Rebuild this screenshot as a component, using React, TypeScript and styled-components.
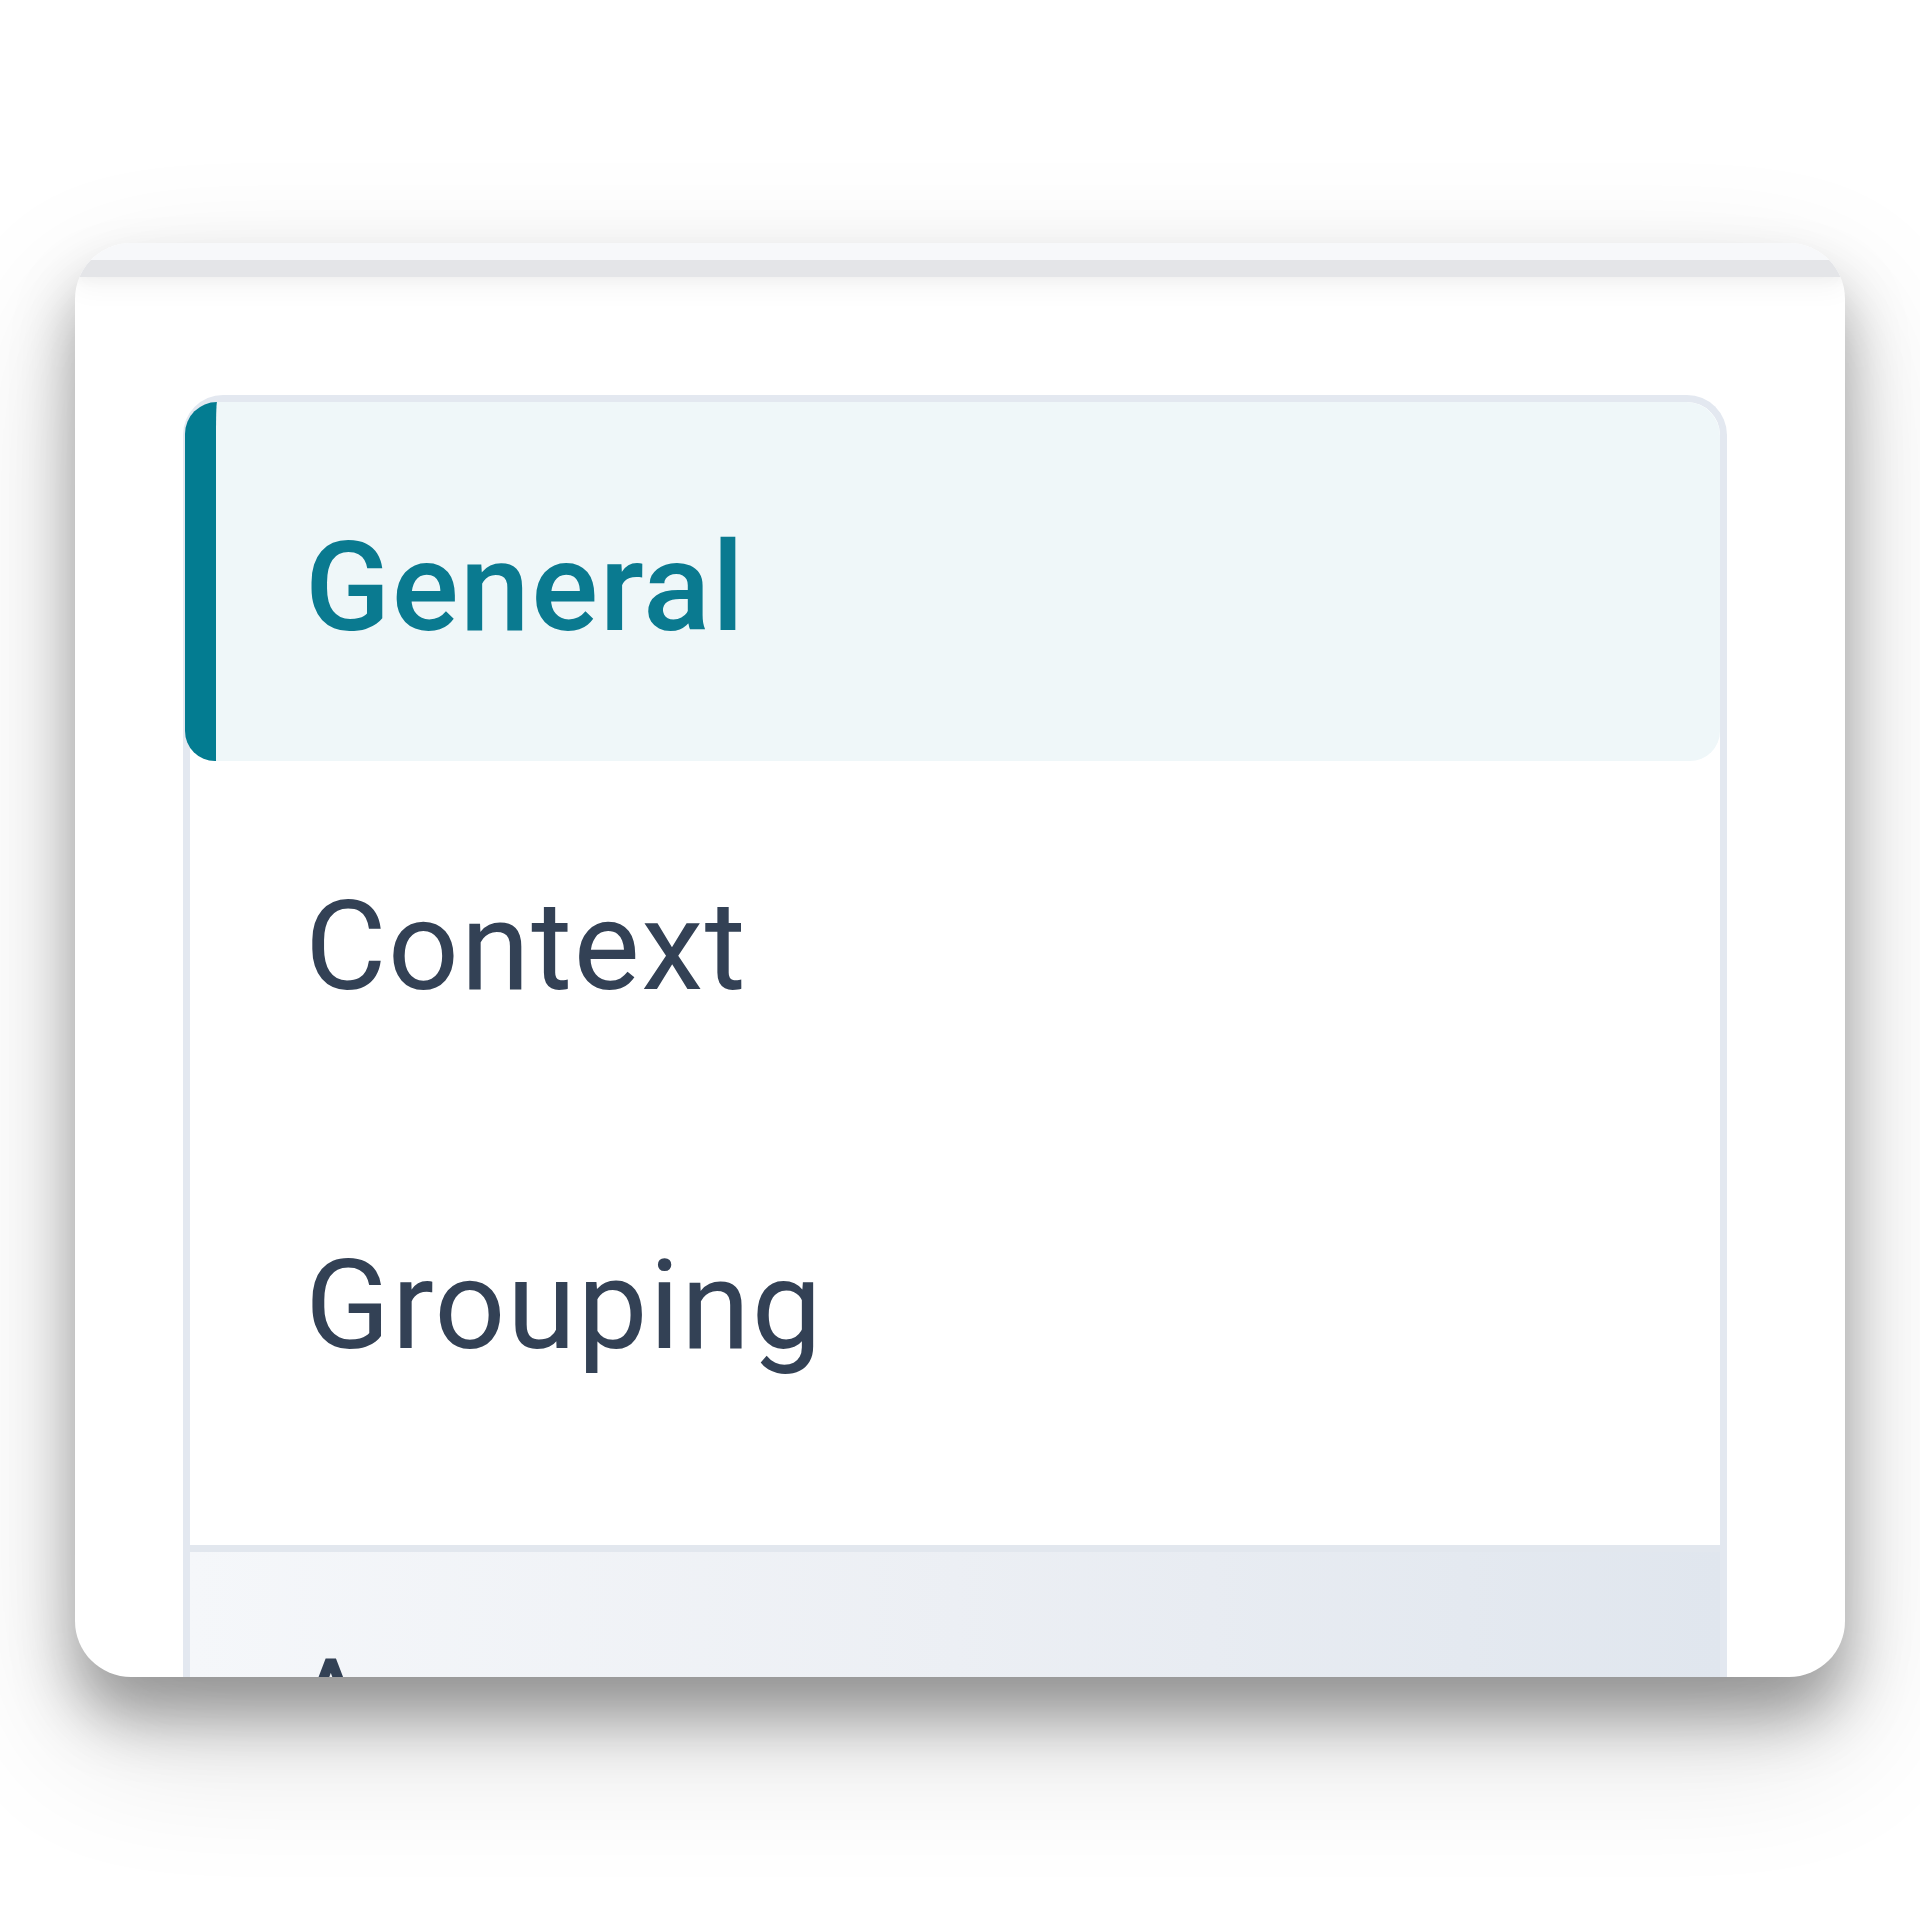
import React from "react";
import styled, { createGlobalStyle } from "styled-components";

const GlobalStyle = createGlobalStyle`
  html, body {
    margin: 0;
    padding: 0;
    background: #ffffff;
  }
  body {
    font-family: Roboto, "Liberation Sans", sans-serif;
  }
`;

const Page = styled.div`
  width: 1920px;
  height: 1920px;
  box-sizing: border-box;
  padding: 243px 75px 0 75px;
  overflow: hidden;
`;

const Card = styled.div`
  height: 1434px;
  background: #ffffff;
  border-radius: 56px;
  overflow: hidden;
  display: flex;
  flex-direction: column;
  box-shadow: 0 40px 60px rgba(0, 0, 0, 0.34), 0 60px 150px rgba(0, 0, 0, 0.15);
`;

const HeaderEdge = styled.div`
  flex-shrink: 0;
  height: 17px;
  background: #f7f8fa;
  border-bottom: 17px solid #e4e5e8;
  box-shadow: 0 4px 10px rgba(0, 0, 0, 0.03), 0 14px 26px rgba(0, 0, 0, 0.035);
  position: relative;
  z-index: 1;
`;

const Body = styled.div`
  flex: 1;
  min-height: 0;
  padding: 118px 118px 0 108px;
`;

const Panel = styled.nav`
  height: 100%;
  box-sizing: border-box;
  border: 7px solid #e3e8f0;
  border-bottom: none;
  border-radius: 40px 40px 0 0;
  display: flex;
  flex-direction: column;
`;

const List = styled.div`
  display: flex;
  flex-direction: column;
  padding-bottom: 66px;
`;

const Item = styled.div<{ $active?: boolean }>`
  height: 359px;
  box-sizing: border-box;
  font-size: 125px;
  line-height: 149px;
  letter-spacing: 1.5px;
  padding-top: 111px;
  padding-left: ${(p) => (p.$active ? "89px" : "115px")};
  margin-left: ${(p) => (p.$active ? "-5px" : "0")};
  border-left: ${(p) => (p.$active ? "31px solid #037c91" : "none")};
  border-radius: ${(p) => (p.$active ? "32px 34px 30px 30px" : "0")};
  background: ${(p) => (p.$active ? "#eff7f9" : "transparent")};
  color: ${(p) => (p.$active ? "#0a7a90" : "#334155")};
  font-weight: ${(p) => (p.$active ? 500 : 400)};
  white-space: nowrap;
`;

const Section = styled.div`
  flex: 1;
  min-height: 0;
  overflow: hidden;
  border-top: 7px solid #e2e7ee;
  background: linear-gradient(90deg, #f5f7fa 0%, #eceff4 50%, #e0e6ee 100%);
  padding: 78px 0 0 100px;
  font-size: 125px;
  line-height: 149px;
  letter-spacing: 1.5px;
  color: #334155;
  white-space: nowrap;
`;

export default function App() {
  return (
    <>
      <GlobalStyle />
      <Page>
        <Card>
          <HeaderEdge />
          <Body>
            <Panel>
              <List>
                <Item $active>General</Item>
                <Item>Context</Item>
                <Item>Grouping</Item>
              </List>
              <Section>Appearance</Section>
            </Panel>
          </Body>
        </Card>
      </Page>
    </>
  );
}
